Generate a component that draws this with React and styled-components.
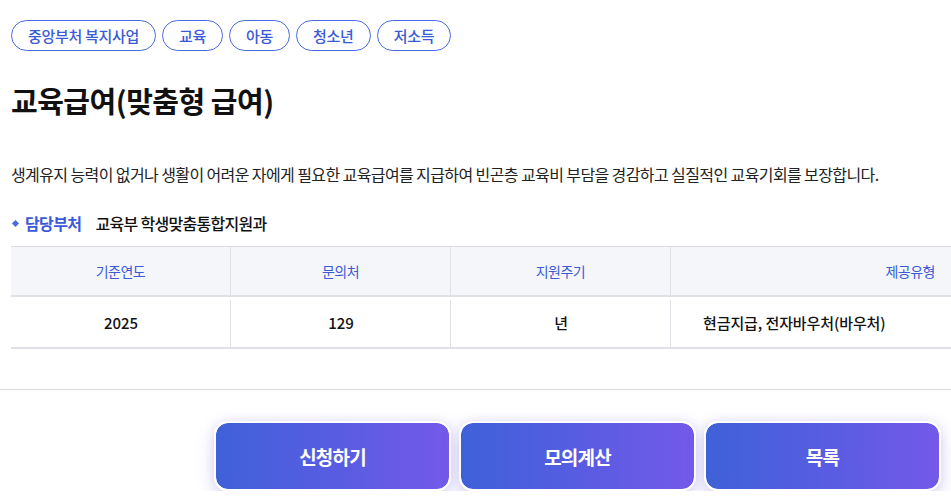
import React from "react";
import styled, { createGlobalStyle } from "styled-components";

const Global = createGlobalStyle`
  html, body { margin: 0; padding: 0; background: #fff; overflow: hidden; }
  body { font-family: "Noto Sans CJK KR", "Noto Sans", sans-serif; color: #111; }
`;

const Page = styled.div`
  width: 951px;
  overflow: hidden;
`;

const Content = styled.div`
  padding: 20px 0 0 11px;
`;

const TagRow = styled.div`
  display: flex;
  gap: 6px;
`;

const Tag = styled.span`
  display: inline-flex;
  align-items: center;
  justify-content: center;
  height: 29px;
  padding: 0 16px;
  border: 1px solid #4a6be0;
  border-radius: 16px;
  color: #3a5ad6;
  font-size: 15px;
  font-weight: 500;
  letter-spacing: -0.3px;
`;

const Title = styled.h1`
  margin: 29px 0 0;
  font-size: 29px;
  font-weight: 700;
  letter-spacing: -0.5px;
  line-height: 40px;
  color: #111;
`;

const Desc = styled.p`
  margin: 42px 0 0;
  font-size: 16px;
  line-height: 24px;
  letter-spacing: -0.6px;
  color: #222;
`;

const Dept = styled.div`
  display: flex;
  align-items: center;
  margin-top: 25px;
  font-size: 16px;
  line-height: 24px;
  letter-spacing: -0.6px;
`;

const Bullet = styled.span`
  width: 5px;
  height: 5px;
  background: #4a6be0;
  transform: rotate(45deg);
  margin: 0 7px 0 2px;
`;

const DeptLabel = styled.span`
  color: #3a5ad6;
  font-weight: 700;
  margin-right: 14px;
`;

const DeptValue = styled.span`
  color: #111;
  font-weight: 500;
  letter-spacing: -0.7px;
`;

const Table = styled.div`
  margin-top: 11px;
  width: 940px;
  display: grid;
  grid-template-columns: 220px 220px 220px 280px;
  border-top: 1px solid #dcdde2;
`;

const HeadCell = styled.div`
  height: 48px;
  display: flex;
  align-items: center;
  justify-content: ${(p) => (p.$right ? "flex-end" : "center")};
  padding-right: ${(p) => (p.$right ? "16px" : "0")};
  background: #f5f6fa;
  border-bottom: 2px solid #e0e1e6;
  border-right: ${(p) => (p.$last ? "none" : "1px solid #e0e1e6")};
  color: #3a5ad6;
  font-size: 14px;
  letter-spacing: -0.5px;
`;

const BodyCell = styled.div`
  height: 50px;
  display: flex;
  align-items: center;
  justify-content: ${(p) => (p.$left ? "flex-start" : "center")};
  padding-left: ${(p) => (p.$left ? "32px" : "0")};
  border-bottom: 2px solid #e0e1e6;
  color: #111;
  font-size: 15px;
  font-weight: 500;
  letter-spacing: -0.1px;
  position: relative;
  &::after {
    content: "";
    display: ${(p) => (p.$last ? "none" : "block")};
    position: absolute;
    right: 0;
    top: 3px;
    bottom: 0;
    width: 1px;
    background: #e0e1e6;
  }
`;

const Divider = styled.hr`
  margin: 40px 0 0;
  border: none;
  border-top: 1px solid #dcdcdc;
  height: 0;
`;

const Actions = styled.div`
  display: flex;
  gap: 8px;
  padding: 31px 0 0 214px;
`;

const ActionButton = styled.button`
  width: 237px;
  height: 70px;
  border: 2.5px solid #fff;
  border-radius: 14px;
  background: linear-gradient(90deg, #3f61d8 0%, #5a5ce2 55%, #7459ea 100%);
  background-clip: padding-box;
  box-shadow: 0 6px 18px rgba(100, 90, 210, 0.22), 0 0 10px rgba(100, 90, 210, 0.12);
  color: #fff;
  font-family: "Noto Sans CJK KR", "Noto Sans", sans-serif;
  font-size: 19px;
  font-weight: 700;
  letter-spacing: -0.8px;
  cursor: pointer;
`;

const tags = ["중앙부처 복지사업", "교육", "아동", "청소년", "저소득"];

export default function App() {
  return (
    <Page>
      <Global />
      <Content>
        <TagRow>
          {tags.map((t) => (
            <Tag key={t}>{t}</Tag>
          ))}
        </TagRow>
        <Title>교육급여(맞춤형 급여)</Title>
        <Desc>
          생계유지 능력이 없거나 생활이 어려운 자에게 필요한 교육급여를 지급하여 빈곤층 교육비 부담을 경감하고 실질적인 교육기회를 보장합니다.
        </Desc>
        <Dept>
          <Bullet />
          <DeptLabel>담당부처</DeptLabel>
          <DeptValue>교육부 학생맞춤통합지원과</DeptValue>
        </Dept>
        <Table>
          <HeadCell>기준연도</HeadCell>
          <HeadCell>문의처</HeadCell>
          <HeadCell>지원주기</HeadCell>
          <HeadCell $right $last>제공유형</HeadCell>
          <BodyCell>2025</BodyCell>
          <BodyCell>129</BodyCell>
          <BodyCell>년</BodyCell>
          <BodyCell $left $last>현금지급, 전자바우처(바우처)</BodyCell>
        </Table>
      </Content>
      <Divider />
      <Actions>
        <ActionButton>신청하기</ActionButton>
        <ActionButton>모의계산</ActionButton>
        <ActionButton>목록</ActionButton>
      </Actions>
    </Page>
  );
}
